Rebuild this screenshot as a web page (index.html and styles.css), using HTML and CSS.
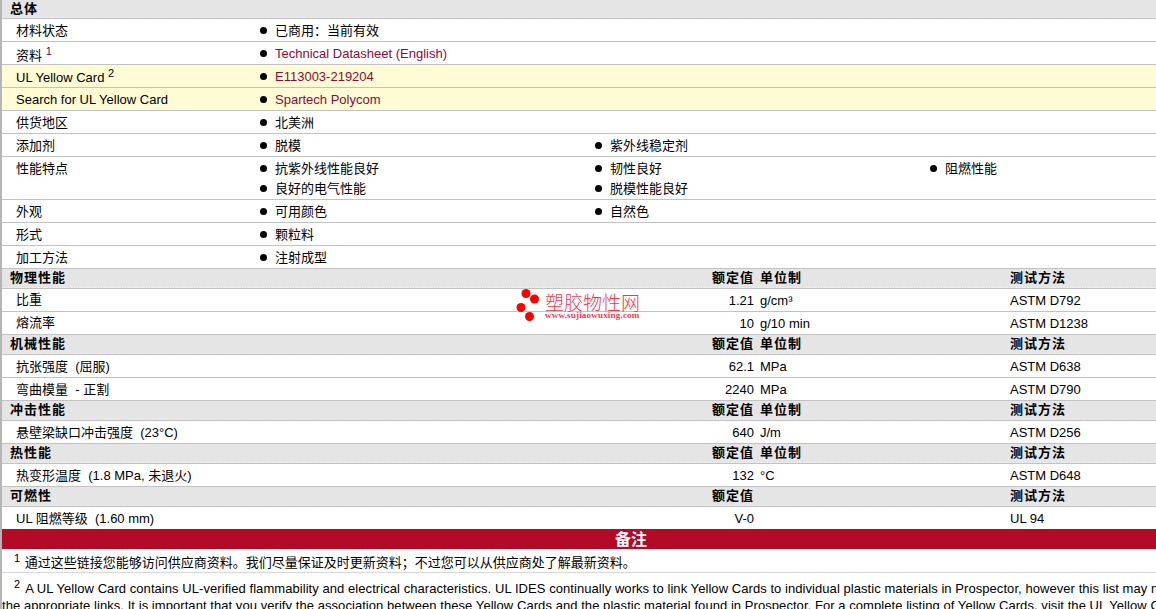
FILE: index.html
```html
<!DOCTYPE html>
<html lang="zh">
<head>
<meta charset="utf-8">
<title>塑胶物性</title>
<link rel="stylesheet" href="styles.css">
</head>
<body>
<main class="sheet">
  <div class="row head h18"><b class="label">总体</b></div>
  <div class="row props"><span class="name">材料状态</span><ul class="vals"><li>已商用：当前有效</li></ul></div>
  <div class="row props"><span class="name with-sup">资料 <sup class="link-sup">1</sup></span><ul class="vals"><li><a href="#">Technical Datasheet (English)</a></li></ul></div>
  <div class="row props yellow"><span class="name with-sup latin">UL Yellow Card <sup>2</sup></span><ul class="vals"><li><a href="#">E113003-219204</a></li></ul></div>
  <div class="row props yellow"><span class="name">Search for UL Yellow Card</span><ul class="vals"><li><a href="#">Spartech Polycom</a></li></ul></div>
  <div class="row props"><span class="name">供货地区</span><ul class="vals"><li>北美洲</li></ul></div>
  <div class="row props"><span class="name">添加剂</span><ul class="vals"><li>脱模</li><li>紫外线稳定剂</li></ul></div>
  <div class="row props tall"><span class="name">性能特点</span><ul class="vals"><li>抗紫外线性能良好</li><li>韧性良好</li><li>阻燃性能</li><li>良好的电气性能</li><li>脱模性能良好</li></ul></div>
  <div class="row props"><span class="name">外观</span><ul class="vals"><li>可用颜色</li><li>自然色</li></ul></div>
  <div class="row props"><span class="name">形式</span><ul class="vals"><li>颗粒料</li></ul></div>
  <div class="row props"><span class="name">加工方法</span><ul class="vals"><li>注射成型</li></ul></div>

  <div class="row head meas"><b class="label">物理性能</b><b class="value">额定值</b><b class="unit">单位制</b><b class="test">测试方法</b></div>
  <div class="row meas"><span class="name raised">比重</span><span class="value">1.21</span><span class="unit">g/cm³</span><span class="test">ASTM D792</span></div>
  <div class="row meas"><span class="name raised">熔流率</span><span class="value">10</span><span class="unit">g/10 min</span><span class="test">ASTM D1238</span></div>

  <div class="row head meas"><b class="label">机械性能</b><b class="value">额定值</b><b class="unit">单位制</b><b class="test">测试方法</b></div>
  <div class="row meas"><span class="name">抗张强度&nbsp; (屈服)</span><span class="value">62.1</span><span class="unit">MPa</span><span class="test">ASTM D638</span></div>
  <div class="row meas"><span class="name">弯曲模量&nbsp; - 正割</span><span class="value">2240</span><span class="unit">MPa</span><span class="test">ASTM D790</span></div>

  <div class="row head meas"><b class="label">冲击性能</b><b class="value">额定值</b><b class="unit">单位制</b><b class="test">测试方法</b></div>
  <div class="row meas"><span class="name">悬壁梁缺口冲击强度&nbsp; (23°C)</span><span class="value">640</span><span class="unit">J/m</span><span class="test">ASTM D256</span></div>

  <div class="row head meas"><b class="label">热性能</b><b class="value">额定值</b><b class="unit">单位制</b><b class="test">测试方法</b></div>
  <div class="row meas"><span class="name">热变形温度&nbsp; (1.8 MPa, 未退火)</span><span class="value">132</span><span class="unit">°C</span><span class="test">ASTM D648</span></div>

  <div class="row head meas"><b class="label">可燃性</b><b class="value">额定值</b><b class="unit"></b><b class="test">测试方法</b></div>
  <div class="row meas last"><span class="name">UL 阻燃等级&nbsp; (1.60 mm)</span><span class="value">V-0</span><span class="unit"></span><span class="test">UL 94</span></div>

  <h2 class="notes-title">备注</h2>
  <p class="note first"><sup>1</sup> 通过这些链接您能够访问供应商资料。我们尽量保证及时更新资料；不过您可以从供应商处了解最新资料。</p>
  <div class="note second"><span class="line"><sup>2</sup> A UL Yellow Card contains UL-verified flammability and electrical characteristics. UL IDES continually works to link Yellow Cards to individual plastic materials in Prospector, however this list may not include all of</span><span class="line">the appropriate links. It is important that you verify the association between these Yellow Cards and the plastic material found in Prospector. For a complete listing of Yellow Cards, visit the UL Yellow Card Search.</span></div>

  <div class="logo">
    <svg class="dots" width="26" height="34" viewBox="0 0 26 34"><circle cx="10" cy="5.500" r="4.500"/><circle cx="18.500" cy="11" r="4.500"/><circle cx="5" cy="19.500" r="4.500"/><circle cx="13.500" cy="28.500" r="4.500"/></svg>
    <div class="logo-text"><span class="logo-cn">塑胶物性网</span><span class="logo-url">www.sujiaowuxing.com</span></div>
  </div>
</main>
</body>
</html>
```

FILE: styles.css
```css
* { box-sizing: border-box; }
html, body { margin: 0; padding: 0; height: 609px; overflow: hidden; background: #fff; }
body {
  font-family: "Liberation Sans", "Noto Sans CJK SC", sans-serif;
  font-size: 13px;
  line-height: 15px;
  color: #000;
}
.sheet { position: relative; width: 1156px; border-left: 2px solid #b5b5b5; }
.row {
  height: 23px;
  border-bottom: 1px solid #c2c2c2;
  display: grid;
  align-items: center;
}
.last { height: 22px; border-bottom: 0; }
.head {
  height: 20px;
  background-color: #e5e5e5;
  background-image: repeating-linear-gradient(90deg, #f3f3f3 0 1px, transparent 1px 3px);
  background-size: 100% 1px;
  background-position: left bottom;
  background-repeat: no-repeat;
}
.head b { position: relative; top: -1px; font-size: 13px; letter-spacing: 1px; }
.h18 { height: 19px; grid-template-columns: 1fr; }
.label { padding-left: 8px; }
.name { padding-left: 14px; white-space: nowrap; }
.name.raised { position: relative; top: -1px; }
.name.with-sup { position: relative; top: 2px; }
.name.latin { top: 1px; }
.props { grid-template-columns: 258px 1fr; }
.yellow { background: #fffbd5; }
.tall { height: 43px; align-items: start; padding-top: 4px; }
.vals {
  list-style: none;
  margin: 0;
  padding: 0;
  display: grid;
  grid-template-columns: 335px 335px 1fr;
  row-gap: 5px;
}
.vals li { display: flex; align-items: center; gap: 8px; }
.vals li::before {
  content: "";
  width: 7px;
  height: 7px;
  border-radius: 50%;
  background: #000;
}
.vals a { color: #8a0b3c; text-decoration: none; }
sup { font-size: 11px; line-height: 0; vertical-align: 5px; }
.link-sup { color: #5c0a5c; }
.meas { grid-template-columns: 698px 54px 250px 1fr; }
.value { text-align: right; white-space: nowrap; }
.unit { padding-left: 6px; white-space: nowrap; }
.test { padding-left: 6px; white-space: nowrap; }
.notes-title {
  margin: 0;
  height: 20px;
  padding-left: 104px;
  background: #b30a26;
  color: #fff;
  font: bold 16px/18px "Noto Sans CJK SC", sans-serif;
  text-align: center;
}
.note { margin: 0; white-space: nowrap; }
.note sup { margin-right: 1px; }
.note.first { height: 24px; padding: 6px 0 0 12px; border-bottom: 1px solid #d8d8d8; }
.note.second { padding: 7px 0 0 0; letter-spacing: 0.06px; }
.note.second sup { margin-right: 2px; }
.line { display: block; line-height: 17px; }
.line:first-child { padding-left: 12px; }
.logo { position: absolute; left: 514px; top: 288px; display: flex; gap: 3px; pointer-events: none; }
.dots { fill: #f00; }
.logo-text { display: flex; flex-direction: column; padding-top: 4px; color: #ee3a48; }
.logo-cn { font: 300 19px/19px "Noto Sans CJK SC", sans-serif; }
.logo-url { font: bold 9px/9px "Liberation Serif", serif; letter-spacing: 0.2px; }
```
